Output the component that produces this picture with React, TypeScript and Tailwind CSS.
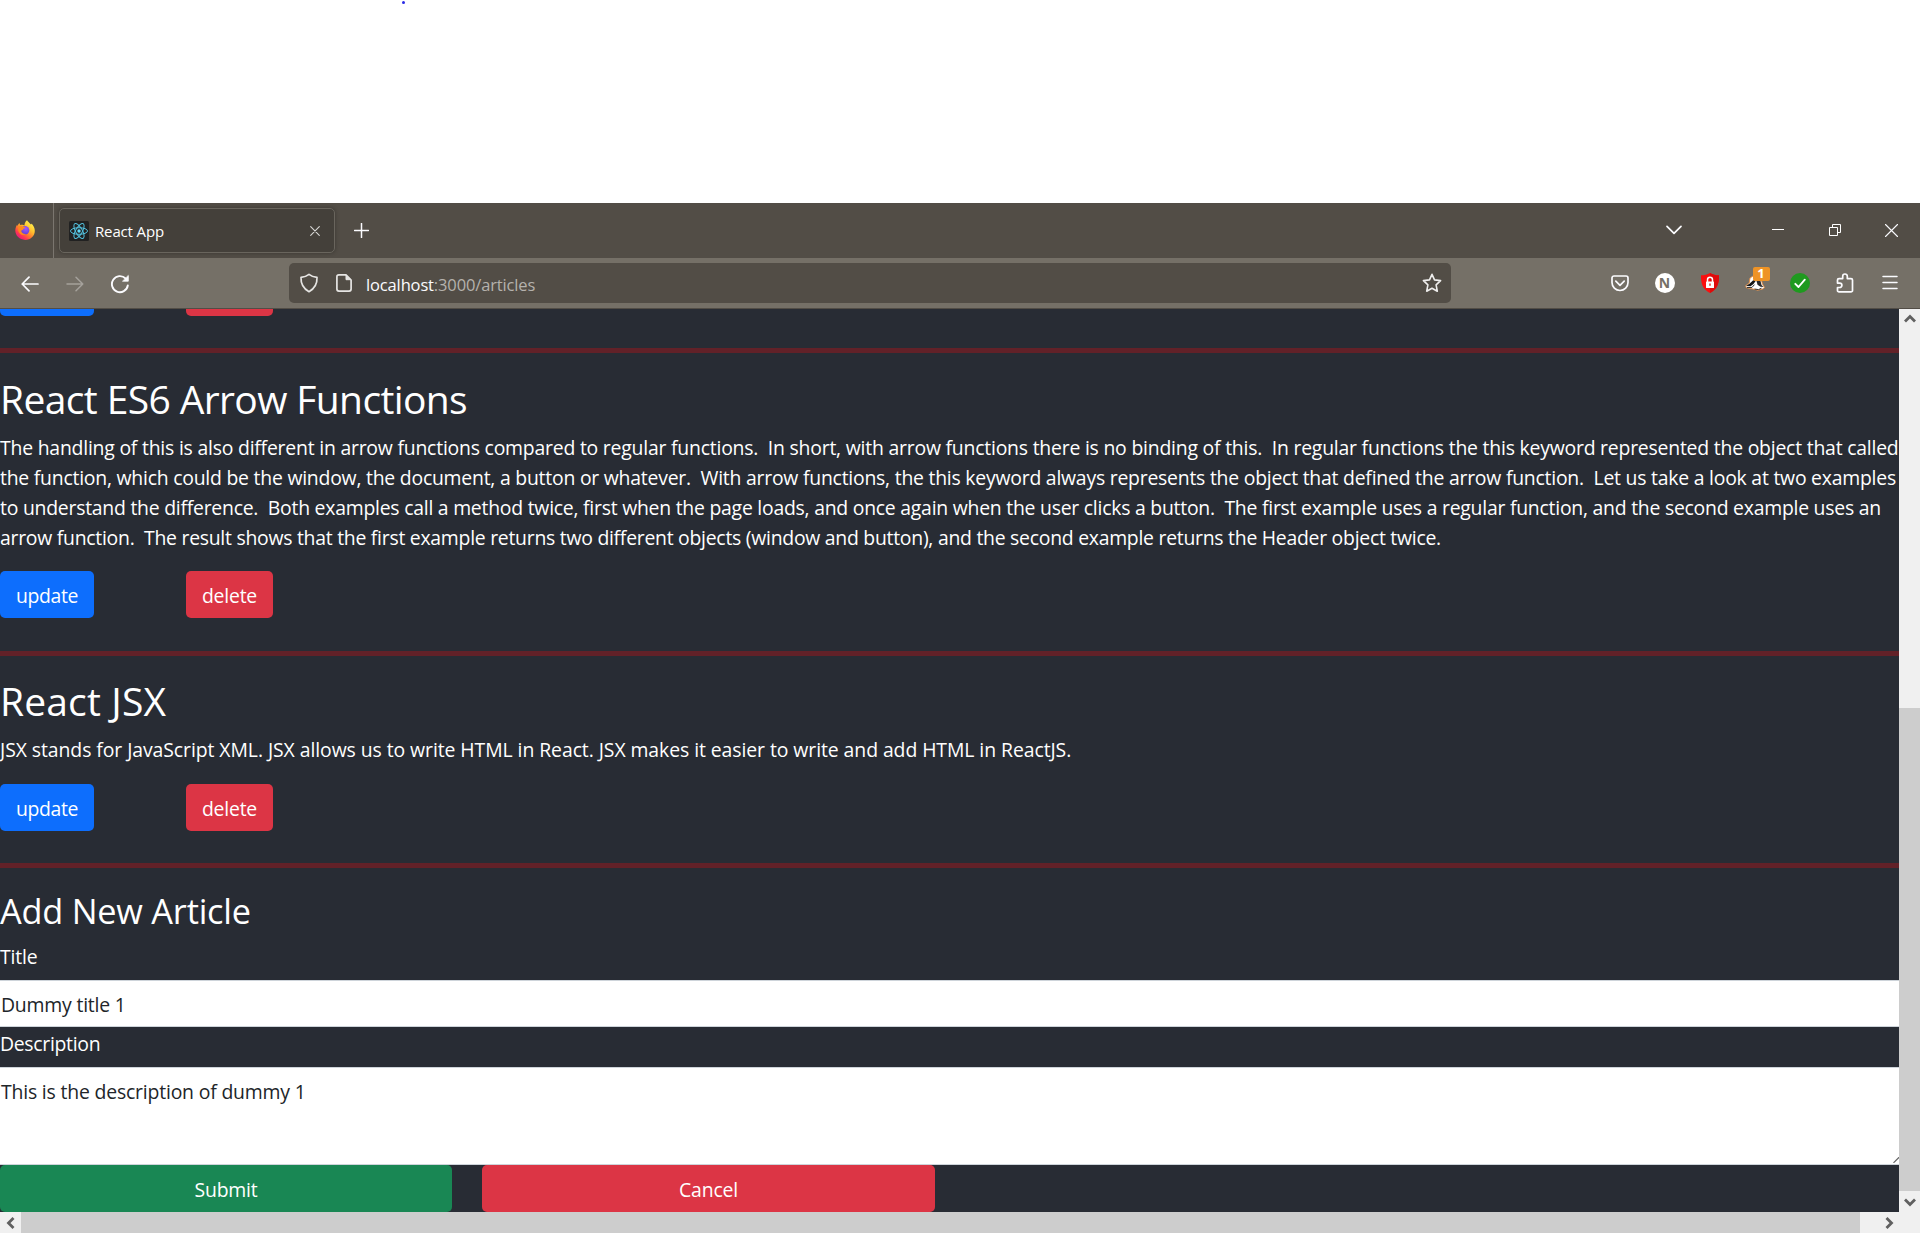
import type { ReactNode } from "react";

type Line = { text: string; spacing: string };

const arrowLines: Line[] = [
  {
    text: "The handling of this is also different in arrow functions compared to regular functions.\u00a0 In short, with arrow functions there is no binding of this.\u00a0 In regular functions the this keyword represented the object that called",
    spacing: "tracking-[-0.213px]",
  },
  {
    text: "the function, which could be the window, the document, a button or whatever.\u00a0 With arrow functions, the this keyword always represents the object that defined the arrow function.\u00a0 Let us take a look at two examples",
    spacing: "tracking-[-0.228px]",
  },
  {
    text: "to understand the difference.\u00a0 Both examples call a method twice, first when the page loads, and once again when the user clicks a button.\u00a0 The first example uses a regular function, and the second example uses an",
    spacing: "tracking-[-0.241px]",
  },
  {
    text: "arrow function.\u00a0 The result shows that the first example returns two different objects (window and button), and the second example returns the Header object twice.",
    spacing: "tracking-[-0.262px]",
  },
];

const jsxLines: Line[] = [
  {
    text: "JSX stands for JavaScript XML. JSX allows us to write HTML in React. JSX makes it easier to write and add HTML in ReactJS.",
    spacing: "tracking-[-0.070px]",
  },
];

function FirefoxLogo() {
  return (
    <svg width="20" height="20" viewBox="0 0 20 20">
      <defs>
        <linearGradient id="flame" x1="0.85" y1="0.1" x2="0.2" y2="0.95">
          <stop offset="0" stopColor="#fff44f" />
          <stop offset="0.35" stopColor="#ffc02e" />
          <stop offset="0.6" stopColor="#ff7a2e" />
          <stop offset="0.8" stopColor="#ff3750" />
          <stop offset="1" stopColor="#e31587" />
        </linearGradient>
        <radialGradient id="globe" cx="0.6" cy="0.3" r="0.8">
          <stop offset="0" stopColor="#a259ff" />
          <stop offset="1" stopColor="#5a3bd0" />
        </radialGradient>
      </defs>
      <path
        d="M12 0.2c.8 1.6 2.6 2.6 4 4.300.5-.2.6-.6.6-1 2 2.200 3.200 4.800 3.200 7.200 0 5.200-4.300 9.200-9.700 9.200S.3 15.700.3 10.600c0-2.600 1-4.600 1.800-5.900.1.5.3.9.5 1.200.3-1.300 1.200-2.400 2-3-.1.8.2 1.500.6 2 1.400-.5 3.400-.2 4.300.6C9.400 3.600 10.300 1.500 12 .2Z"
        fill="url(#flame)"
      />
      <circle cx="10" cy="10.200" r="4.300" fill="url(#globe)" />
      <path d="M3.200 6.600c1.700-1 3.700-.9 4.900.200 1 .1 1.900.1 2.100.6-.2.900-1.800 1-2 1.700.1 1-1 1.300-2 1.600.1 2 2.300 3.800 5 3.300-3.300 2.300-7.300 0-8-3.600Z" fill="#ff8a1e" />
    </svg>
  );
}

function ReactFavicon() {
  return (
    <svg width="20" height="20" viewBox="0 0 20 20">
      <rect width="20" height="20" rx="1.500" fill="#212121" />
      <g fill="none" stroke="#53c1de" strokeWidth="1">
        <ellipse cx="10" cy="10" rx="8.500" ry="3.300" />
        <ellipse cx="10" cy="10" rx="8.500" ry="3.300" transform="rotate(60 10 10)" />
        <ellipse cx="10" cy="10" rx="8.500" ry="3.300" transform="rotate(120 10 10)" />
      </g>
      <circle cx="10" cy="10" r="1.700" fill="#61dafb" />
    </svg>
  );
}

function Stroke({ w, h, sw = 1.5, color = "#fbfbfe", children }: { w: number; h: number; sw?: number; color?: string; children: ReactNode }) {
  return (
    <svg
      width={w}
      height={h}
      viewBox={`0 0 ${w} ${h}`}
      fill="none"
      stroke={color}
      strokeWidth={sw}
      strokeLinecap="round"
      strokeLinejoin="round"
      className="shrink-0"
    >
      {children}
    </svg>
  );
}

function TabStrip() {
  return (
    <div className="flex h-[55px] bg-[#524d46] text-white">
      <div className="flex w-[54px] items-center border-r border-[#7b766f] pb-[1px] pl-[15px]">
        <FirefoxLogo />
      </div>
      <div className="mt-[5px] ml-[5px] flex h-[45px] w-[276px] items-center rounded-[5px] border border-[#69655d] bg-[#44403a] shadow-[0_0_4px_rgba(0,0,0,0.3)]">
        <div className="ml-[9px]">
          <ReactFavicon />
        </div>
        <span className="ml-[6px] text-[15px] leading-5 tracking-[-0.15px]">React App</span>
        <div className="mr-[14px] ml-auto">
          <Stroke w={10} h={10} sw={1.1} color="#d8d7d5">
            <path d="M.7.7l8.600 8.600M9.300.7L.7 9.300" />
          </Stroke>
        </div>
      </div>
      <div className="flex items-center pl-[19px]">
        <Stroke w={15} h={15}>
          <path d="M7.500 .5v14M.5 7.500h14" />
        </Stroke>
      </div>
      <div className="ml-auto flex">
        <div className="mr-[67px] flex items-center pb-[1px]">
          <Stroke w={16} h={10} sw={1.7}>
            <path d="M1 1.300l7 7 7-7" />
          </Stroke>
        </div>
        <div className="flex w-[57px] items-center justify-center pb-[2px]">
          <div className="h-px w-3 bg-white" />
        </div>
        <div className="flex w-[57px] items-center justify-center pb-px">
          <svg width="12" height="12" viewBox="0 0 12 12" fill="none" stroke="#fff" className="shrink-0">
            <path d="M.5 3.500h8v8h-8zM3.500 3.500v-3h8v8h-3" />
          </svg>
        </div>
        <div className="flex w-[57px] items-center justify-center pb-px">
          <Stroke w={13} h={13} sw={1.1}>
            <path d="M.5.5l12 12M12.500.5l-12 12" />
          </Stroke>
        </div>
      </div>
    </div>
  );
}

function Cell({ children }: { children: ReactNode }) {
  return <div className="flex w-[45px] items-center justify-center">{children}</div>;
}

function Toolbar() {
  return (
    <div className="flex h-[51px] border-b border-[#524d46] bg-[#757067]">
      <div className="flex w-[289px] pt-px pl-[7px]">
        <Cell>
          <Stroke w={18} h={16} sw={1.7}>
            <path d="M17 8H1.200M8 1.200L1.200 8 8 14.800" />
          </Stroke>
        </Cell>
        <Cell>
          <Stroke w={18} h={16} sw={1.5} color="#a5a19b">
            <path d="M1 8h15.800M10 1.200L16.800 8 10 14.800" />
          </Stroke>
        </Cell>
        <Cell>
          <Stroke w={20} h={20} sw={1.9}>
            <path d="M17.800 11.500A8 8 0 1 1 15.600 4.500" />
            <path d="M18.300 1.800v5.400h-5.400z" fill="#fbfbfe" strokeWidth="0.800" />
          </Stroke>
        </Cell>
      </div>
      <div className="mt-[5px] flex h-10 w-[1162px] items-center rounded-[5px] bg-[#524d46] pr-[9px] pl-[10px]">
        <Stroke w={20} h={20} sw={1.7} color="#e6e5e3">
          <path d="M10 1.300c2.300 1.800 5 2.700 8 3 .3 6.200-2.300 11.300-8 14.400C4.300 15.600 1.700 10.500 2 4.300c3-.3 5.700-1.200 8-3Z" />
        </Stroke>
        <div className="ml-[17px]">
          <Stroke w={16} h={18} sw={1.7} color="#e6e5e3">
            <path d="M10 .9H2.900a2 2 0 0 0-2 2v12.200a2 2 0 0 0 2 2h10.200a2 2 0 0 0 2-2V6Z" />
            <path d="M10 1.400v4.300h4.500z" fill="#e6e5e3" strokeWidth="1" />
          </Stroke>
        </div>
        <span className="mt-[3px] ml-[14px] text-[16.500px] leading-6 tracking-[-0.140px] text-[#b5b2ad]">
          <span className="text-[#fbfbfe]">localhost</span>:3000/articles
        </span>
        <div className="ml-auto">
          <Stroke w={20} h={20} sw={1.6} color="#efeeed">
            <path d="M10 1.300l2.500 5.600 6.100.7-4.500 4.200 1.200 6.400L10 15.200l-5.300 3 1.200-6.400L1.400 7.600l6.100-.7Z" />
          </Stroke>
        </div>
      </div>
      <div className="mr-[8px] ml-auto flex">
        <Cell>
          <Stroke w={18} h={17} sw={1.7}>
            <path d="M3 1h12a2 2 0 0 1 2 2v4.500a8 8 0 0 1-16 0V3a2 2 0 0 1 2-2Z" />
            <path d="M4.800 6.200L9 10.300l4.200-4.100" />
          </Stroke>
        </Cell>
        <Cell>
          <div className="flex size-5 items-center justify-center rounded-full bg-white text-[14px] leading-none font-bold text-[#757067]">
            N
          </div>
        </Cell>
        <Cell>
          <svg width="18" height="20" viewBox="0 0 18 20" className="shrink-0">
            <path d="M9 0c2.700 1.700 5.600 2.300 9 2.300C18.300 10.500 16 16.500 9 20 2 16.500-.3 10.500 0 2.300 3.400 2.300 6.300 1.700 9 0Z" fill="#fb0f0f" />
            <path d="M9 0c2.700 1.700 5.600 2.300 9 2.300C18.300 10.500 16 16.500 9 20Z" fill="#de0b0b" />
            <rect x="5" y="8.500" width="8" height="6.500" rx="0.600" fill="#fff" />
            <path d="M6.500 9V6.800a2.500 2.500 0 0 1 5 0V9" fill="none" stroke="#fff" strokeWidth="1.500" />
            <path d="M9 10.600v2.200" stroke="#e01010" strokeWidth="1.300" />
          </svg>
        </Cell>
        <Cell>
          <div className="relative">
            <svg width="20" height="20" viewBox="0 0 20 20" className="block">
              <path d="M.6 12.800L4.200 10 5 5l3-2 8 3 1.500 5 2 3.500-2 1.500-4.500 1.200-5-1.200-6.500-1.200Z" fill="#fff" stroke="#e58a3c" strokeWidth="0.900" />
              <path d="M1 12.900l3.700-2.300 3.500-3.400h3L8.500 11l-3 2.300Z" fill="#151515" />
              <path d="M11.500 8h4l1 4 2 2-3-.3-3-2Z" fill="#2a2a2a" />
              <path d="M2 14.600l5-.2 2.500-2.800M9.500 16l4 .6 3-1.400" fill="none" stroke="#333" strokeWidth="1" />
            </svg>
            <span className="absolute -top-[6px] left-[8px] flex h-[14px] w-[17px] items-center justify-center rounded-[2px] bg-[#ee9326] pb-px text-[13px] leading-none font-bold text-white">
              1
            </span>
          </div>
        </Cell>
        <Cell>
          <svg width="20" height="20" viewBox="0 0 20 20" className="shrink-0">
            <circle cx="10" cy="10" r="10" fill="#1f9a1f" />
            <path d="M5.300 10.800l3.200 3.200 6.300-7.300" fill="none" stroke="#fff" strokeWidth="1.900" strokeLinecap="round" strokeLinejoin="round" />
          </svg>
        </Cell>
        <Cell>
          <Stroke w={18} h={20} sw={1.7}>
            <path d="M6.700 5.600V3.300a2.300 2.300 0 0 1 4.600 0v2.300h3.700a1.500 1.500 0 0 1 1.500 1.500v10.300a1.500 1.500 0 0 1-1.500 1.500H3a1.500 1.500 0 0 1-1.500-1.500v-2.900h2.200a2.200 2.200 0 0 0 0-4.400H1.500v-3A1.500 1.500 0 0 1 3 5.600Z" />
          </Stroke>
        </Cell>
        <Cell>
          <Stroke w={16} h={16} sw={1.5}>
            <path d="M1 1.500h14M1 7.500h14M1 13.500h14" />
          </Stroke>
        </Cell>
      </div>
    </div>
  );
}

function Rule() {
  return <div className="h-[5px] bg-[#622128]" />;
}

function ArticleButtons() {
  return (
    <div className="flex gap-[92px] text-white">
      <button className="h-[47px] w-[94px] rounded-[5px] bg-[#0d6efd] pt-[3px] text-[19.400px] leading-[30px] tracking-[-0.350px]">update</button>
      <button className="h-[47px] w-[87px] rounded-[5px] bg-[#dc3545] pt-[3px] text-[19.400px] leading-[30px] tracking-[-0.200px]">delete</button>
    </div>
  );
}

function Article({ title, titleSpacing, padding, lines }: { title: string; titleSpacing: string; padding: string; lines: Line[] }) {
  return (
    <article className={`flex flex-col ${padding}`}>
      <h2 className={`h-[48px] text-[39px] leading-[51px] ${titleSpacing}`}>{title}</h2>
      <p className="mt-3 text-[19.400px] leading-[30px] whitespace-nowrap">
        {lines.map((line) => (
          <span key={line.text} className={`block ${line.spacing}`}>
            {line.text}
          </span>
        ))}
      </p>
      <div className="mt-auto">
        <ArticleButtons />
      </div>
    </article>
  );
}

function Chevron({ d, w, h }: { d: string; w: number; h: number }) {
  return (
    <svg width={w} height={h} viewBox={`0 0 ${w} ${h}`} fill="none" stroke="#606060" strokeWidth="2.800" className="shrink-0">
      <path d={d} />
    </svg>
  );
}

export default function App() {
  return (
    <div className="h-[1233px] w-[1920px] overflow-hidden bg-white font-['Open_Sans',sans-serif]">
      <div className="h-[203px] pt-px pl-[402px]">
        <div className="size-[3px] rounded-full bg-[#2a2ae6]" />
      </div>
      <TabStrip />
      <Toolbar />

      <div className="flex h-[903px]">
        <main className="w-[1899px] overflow-hidden bg-[#282c34] text-white">
          <div className="flex h-[7px] items-end gap-[92px]">
            <div className="h-[7px] w-[94px] rounded-b-[5px] bg-[#0d6efd]" />
            <div className="h-[7px] w-[87px] rounded-b-[5px] bg-[#dc3545]" />
          </div>
          <div className="h-8" />
          <Rule />
          <Article title="React ES6 Arrow Functions" titleSpacing="tracking-[-0.620px]" padding="h-[265px] pt-5" lines={arrowLines} />
          <div className="h-[33px]" />
          <Rule />
          <Article title="React JSX" titleSpacing="tracking-[0.150px]" padding="h-[175px] pt-[19px]" lines={jsxLines} />
          <div className="h-8" />
          <Rule />

          <form>
            <h3 className="mt-5 h-[42px] text-[34.300px] leading-[46px] tracking-[-0.220px]">Add New Article</h3>
            <label className="mt-[10px] block h-[30px] text-[19.400px] leading-[34px] tracking-[-0.150px]">Title</label>
            <div className="mt-[10px] h-[47px] border-y border-[#ced4da] bg-white pt-[9px] pl-px text-[19.400px] leading-[30px] tracking-[-0.200px] text-[#212529]">
              Dummy title 1
            </div>
            <label className="block h-[30px] text-[19.400px] leading-[34px] tracking-[-0.300px]">Description</label>
            <div className="relative mt-[10px] h-[98px] border-y border-[#ced4da] bg-white pt-[9px] pl-px text-[19.400px] leading-[30px] tracking-[-0.180px] text-[#212529]">
              This is the description of dummy 1
              <svg width="6" height="6" viewBox="0 0 6 6" className="absolute right-0 bottom-px" fill="none" stroke="#606060" strokeWidth="1.200">
                <path d="M.5 5.800L6 .3" />
              </svg>
            </div>
            <div className="flex gap-[30px] text-[19.400px] leading-[30px] tracking-[-0.200px]">
              <button type="button" className="h-[47px] w-[452px] rounded-[5px] bg-[#198754] pt-[3px]">
                Submit
              </button>
              <button type="button" className="h-[47px] w-[453px] rounded-[5px] bg-[#dc3545] pt-[3px]">
                Cancel
              </button>
            </div>
          </form>
        </main>

        <div className="flex w-[21px] flex-col items-center bg-[#f0f0f0]">
          <div className="flex h-[399px] pt-[5px]">
            <Chevron w={12} h={9} d="M1 7.500l5-5 5 5" />
          </div>
          <div className="h-[483px] w-full bg-[#cdcdcd]" />
          <div className="flex h-[21px] items-center pt-px">
            <Chevron w={12} h={9} d="M1 1.500l5 5 5-5" />
          </div>
        </div>
      </div>

      <div className="flex h-[21px] items-center bg-[#f0f0f0]">
        <div className="flex w-[21px] justify-center pr-px">
          <Chevron w={9} h={12} d="M7.500 1l-5 5 5 5" />
        </div>
        <div className="h-full w-[1839px] bg-[#cdcdcd]" />
        <div className="ml-[25px]">
          <Chevron w={9} h={12} d="M1.500 1l5 5-5 5" />
        </div>
      </div>
    </div>
  );
}
